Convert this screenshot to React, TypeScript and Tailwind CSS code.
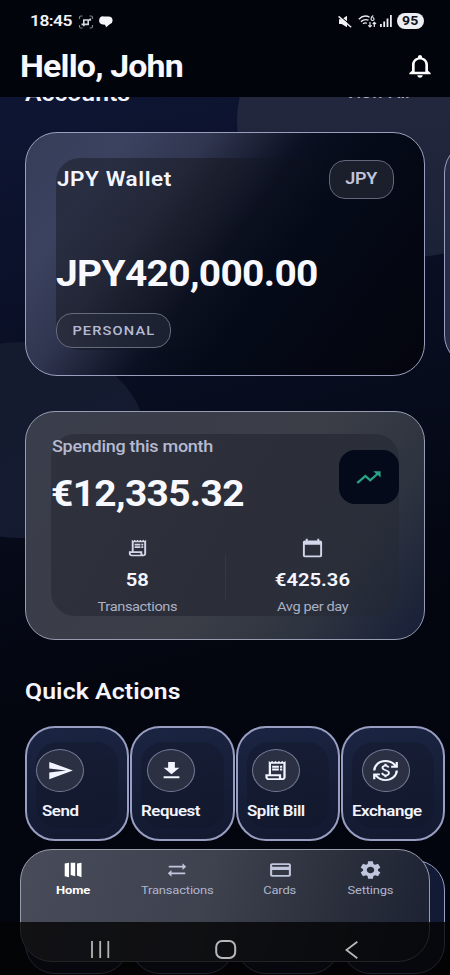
import React, { ReactNode } from 'react';
import clsx from 'clsx';
import { twMerge } from 'tailwind-merge';
import { IconType } from 'react-icons';
import {
  MdCalendarToday,
  MdCurrencyExchange,
  MdDownload,
  MdNotificationsNone,
  MdOutlineCreditCard,
  MdOutlineReceiptLong,
  MdSend,
  MdSettings,
  MdSyncAlt,
  MdTrendingUp,
} from 'react-icons/md';

interface TextProps {
  className?: string;
  children: ReactNode;
}

// All the type in the app is set slightly wide
function Text({ className, children }: TextProps) {
  return (
    <span className={twMerge('inline-block whitespace-nowrap scale-x-[1.125]', className)}>
      {children}
    </span>
  );
}

interface QuickAction {
  label: string;
  icon: IconType;
  circle: string;
  text: string;
}

const quickActions: QuickAction[] = [
  { label: 'Send', icon: MdSend, circle: 'ml-0', text: 'ml-[6px]' },
  { label: 'Request', icon: MdDownload, circle: 'ml-[6px]', text: 'ml-0' },
  { label: 'Split Bill', icon: MdOutlineReceiptLong, circle: 'ml-[5px]', text: 'ml-0' },
  { label: 'Exchange', icon: MdCurrencyExchange, circle: 'ml-[10px]', text: 'ml-0' },
];

function StatusBar() {
  return (
    <div className="flex h-[42px] items-center pl-[30px] pr-[26px] text-[#f1f2f6]">
      <Text className="mt-[2px] origin-left text-[15.500px] leading-none font-semibold tracking-[-0.500px]">18:45</Text>
      <svg className="mt-px ml-[11px] h-[14px] w-[16px]" viewBox="0 0 15 14" fill="none" stroke="#d5d7de" strokeWidth="1.2">
        <path d="M1 4V2.5Q1 1 2.5 1H4M11 1h1.500Q14 1 14 2.500V4M14 10v1.500Q14 13 12.500 13H11M4 13H2.500Q1 13 1 11.500V10" strokeOpacity="0.6" />
        <path d="M3 9.400h6.700V5M5.300 11.200V5h6.500V3.500" strokeWidth="1.600" />
      </svg>
      <svg className="mt-px ml-[5px] h-3 w-[14px]" viewBox="0 0 15 12" fill="#f4f5f8">
        <path d="M5 0h5a4.300 4.300 0 0 1 1.500 8.400L7.600 11.700 6.500 9 4 8.600A4.300 4.300 0 0 1 5 0z" />
      </svg>
      <div className="ml-auto flex items-center">
        <svg className="h-[13px] w-[14px]" viewBox="0 0 14 13">
          <path d="M1 4.300h2.700L9 .8v11.400L3.700 9H1z" fill="#f1f2f6" />
          <path d="M1.300.600 14 11" stroke="#02040c" strokeWidth="1.200" />
          <path d="M.6 1.400 13.200 12.200" stroke="#f1f2f6" strokeWidth="1.400" />
        </svg>
        <svg className="ml-[6px] h-[13px] w-[19px]" viewBox="0 0 19 13" fill="none" stroke="#e6e8ee" strokeWidth="1.400">
          <path d="M.8 4.200Q6-.8 11.500 2.200M2.900 6.600Q6.500 3.600 10.500 5.200M5 8.700Q7 7.300 8.800 8.300" />
          <path d="M15.300.6Q13 2 13 4a1.500 1.500 0 1 0 1.500-1.500M12 7v5M10.300 10.300 12 12l1.700-1.700M16.300 12V7.500M14.700 9l1.600-1.600L18 9" strokeWidth="1.200" />
        </svg>
        <svg className="ml-[3px] h-3 w-[12px]" viewBox="0 0 12 12" fill="#eceef3">
          <path d="M0 9h1.800v3H0zM3.300 6.500h1.800V12H3.300zM6.600 3.500h1.800V12H6.600zM10 0h1.800v12H10z" />
        </svg>
        <div className="ml-[5px] flex h-4 w-[27px] items-center justify-center rounded-full bg-[#eceef4]">
          <Text className="text-[12.500px] leading-none font-bold text-[#10131c]">95</Text>
        </div>
      </div>
    </div>
  );
}

function Header() {
  return (
    <header className="relative z-10 h-[97px] bg-[#02040c]">
      <StatusBar />
      <div className="flex h-12 items-center justify-between pr-[14px] pl-5">
        <Text className="origin-left scale-x-[1.06] text-[32px] leading-[34px] font-bold tracking-[-0.800px] text-[#f8f9ff]">
          Hello, John
        </Text>
        <MdNotificationsNone className="h-7 w-8 text-white" preserveAspectRatio="none" />
      </div>
    </header>
  );
}

// Large soft discs behind the cards
function Backdrop() {
  return (
    <svg className="absolute inset-0 h-full w-full" viewBox="0 0 450 975">
      <defs>
        <linearGradient id="disc" x1="0" y1="0" x2="0" y2="1">
          <stop offset="0" stopColor="#272c44" />
          <stop offset="1" stopColor="#1b2136" />
        </linearGradient>
        <linearGradient id="disc2" x1="0" y1="0" x2="0.8" y2="1">
          <stop offset="0" stopColor="#151b2e" />
          <stop offset="1" stopColor="#141a30" />
        </linearGradient>
      </defs>
      <ellipse cx="402" cy="121" rx="165" ry="137" fill="url(#disc)" />
      <ellipse cx="22" cy="440" rx="124" ry="98" fill="url(#disc2)" />
    </svg>
  );
}

function Accounts() {
  return (
    <section>
      <div className="-mt-[12px] flex h-[47px] items-start justify-between pr-[40px] pl-[25px]">
        <Text className="origin-left text-[22px] leading-[17px] font-semibold text-[#f3f4fb]">Accounts</Text>
        <Text className="origin-right text-[16px] leading-[15px] font-medium text-[#a9aec4]">View All</Text>
      </div>
      <div className="flex gap-[19px] overflow-hidden pl-[25px]">
        <div className="h-[244px] w-[400px] shrink-0 rounded-[32px] border-[1.500px] border-[#9a9fbe] bg-[linear-gradient(127deg,#363d58_0%,#3b4260_18%,#30364f_32%,#0b1022_49%,#050a18_62%,#04050d_100%)] pt-[25px] pr-[25px] pl-[30px]">
          <div className="-mr-1 h-[192px] rounded-[24px] bg-[linear-gradient(125deg,#14151c70_0%,#10121870_35%,#02061000_60%)]">
            <div className="flex items-start justify-between pt-[2px] pr-[9px]">
              <Text className="mt-[6px] ml-px origin-left text-[20px] leading-[26px] font-semibold tracking-[0.500px] text-[#f3f5ff]">
                JPY Wallet
              </Text>
              <div className="flex h-[39px] w-[65px] items-center justify-center rounded-2xl border-[1.500px] border-[#63677a] bg-[#1b1f2c]">
                <Text className="-mt-px text-[16px] leading-none font-semibold tracking-[-0.300px] text-[#c0c4db]">JPY</Text>
              </div>
            </div>
            <Text className="mt-[54px] block origin-left scale-x-[1.08] text-[36px] leading-[42px] font-bold tracking-[-0.600px] text-[#f8f9ff]">
              JPY420,000.00
            </Text>
            <div className="mt-[18px] flex h-[35px] w-[115px] items-center justify-center rounded-[16px] border-[1.500px] border-[#656b7d] bg-[linear-gradient(90deg,#292d3d,#1b2031)]">
              <Text className="text-[13px] leading-none font-medium tracking-[1px] text-[#b5bad2]">PERSONAL</Text>
            </div>
          </div>
        </div>
        <div className="h-[226px] w-[400px] shrink-0 self-center rounded-[32px] border-[1.500px] border-[#9a9fbe] bg-[#262c4a]" />
      </div>
    </section>
  );
}

interface StatProps {
  icon: IconType;
  value: string;
  label: string;
}

function Stat({ icon: Icon, value, label }: StatProps) {
  return (
    <div className="flex flex-1 flex-col items-center">
      <Icon className="h-5 w-[23px] text-[#d4d7ea]" preserveAspectRatio="none" />
      <Text className="mt-[11px] text-[18px] leading-[22px] font-semibold text-[#f5f6ff]">{value}</Text>
      <Text className="mt-[8px] text-[13px] leading-4 tracking-[-0.350px] text-[#abb0c4]">{label}</Text>
    </div>
  );
}

function Spending() {
  return (
    <section className="mx-[25px] mt-[35px] h-[229px] rounded-[30px] border-[1.500px] border-[#979cb2] bg-[linear-gradient(125deg,#3a3d4b_0%,#3b3e47_55%,#2d333f_78%,#171f38_100%)] px-[25px] pt-[22px]">
      <div className="h-[182px] rounded-[24px] bg-[linear-gradient(120deg,#2f323d_0%,#2b2e39_60%,#20263280_100%)]">
        <div className="flex h-[101px] items-start justify-between">
          <div className="flex flex-col items-start pt-[3px]">
            <Text className="ml-px origin-left text-[16px] leading-5 font-medium tracking-[-0.250px] text-[#b6bad0]">
              Spending this month
            </Text>
            <Text className="mt-4 origin-left scale-x-[1.08] text-[36px] leading-[42px] font-bold tracking-[-0.600px] text-[#f8f9ff]">
              €12,335.32
            </Text>
          </div>
          <div className="mt-4 flex h-[54px] w-[60px] items-center justify-center rounded-[16px] bg-[#040a19]">
            <MdTrendingUp className="-ml-px h-[25px] w-[29px] text-[#27a586]" preserveAspectRatio="none" />
          </div>
        </div>
        <div className="flex pt-[3px]">
          <Stat icon={MdOutlineReceiptLong} value="58" label="Transactions" />
          <div className="mt-[17px] h-[44px] w-px bg-[#343746]" />
          <Stat icon={MdCalendarToday} value="€425.36" label="Avg per day" />
        </div>
      </div>
    </section>
  );
}

function QuickActions() {
  return (
    <section>
      <Text className="mt-[39px] ml-[25px] block origin-left text-[22px] leading-[26px] font-semibold tracking-[0.100px] text-[#f5f6ff]">
        Quick Actions
      </Text>
      <div className="mt-[21px] grid grid-cols-4 gap-x-px gap-y-[19px] pr-[5px] pl-[25px]">
        {quickActions.map(({ label, icon: Icon, circle, text }) => (
          <div
            key={label}
            className="h-[115px] rounded-[30px] border-2 border-[#989ec2] bg-[linear-gradient(170deg,#1b2442,#12192f)] px-[9px] pt-[14px]"
          >
            <div className="h-[86px] rounded-[22px] bg-[#11182a]/50 pt-[7px]">
              <div className={clsx('flex h-[43px] w-[48px] items-center justify-center rounded-[50%] border-[1.500px] border-[#747a96] bg-[#2b3043]', circle)}>
                <Icon className="h-[23px] w-[27px] text-[#f2f4ff]" preserveAspectRatio="none" />
              </div>
              <Text className={clsx('mt-[10px] block origin-left text-[15px] leading-[18px] font-semibold tracking-[-0.400px] text-[#f3f4fd]', text)}>
                {label}
              </Text>
            </div>
          </div>
        ))}
        {[0, 1, 2, 3].map((n) => (
          <div key={n} className="h-[114px] rounded-[30px] border-[1.500px] border-[#989ec2] bg-[#121a35]" />
        ))}
      </div>
    </section>
  );
}

function HomeIcon() {
  return (
    <svg className="h-5 w-[22px]" viewBox="0 0 22 20" fill="#fff">
      <path d="M2.700 3.600 7 2.800v14.500l-4.300-1.100zM8.700 2.800h4.500v13.400l-4.500-1.300zM15 3.600l4.500-.8v14.500L15 15.400z" />
    </svg>
  );
}

interface TabProps {
  label: string;
  active?: boolean;
  className: string;
  children: ReactNode;
}

function Tab({ label, active, className, children }: TabProps) {
  return (
    <div className={clsx('flex flex-col items-center text-[#c0c6dc]', className)}>
      {children}
      <Text className={clsx('mt-[2px] text-[11.500px] leading-4 tracking-[-0.150px]', active ? 'font-bold text-white' : 'font-normal text-[#b0b6cc]')}>
        {label}
      </Text>
    </div>
  );
}

function TabBar() {
  return (
    <nav className="absolute top-[849px] left-[20px] h-[113px] w-[410px] rounded-[32px] border-[1.500px] border-[#999ca9] bg-[linear-gradient(105deg,#484b59_0%,#3e414e_45%,#2b2f3c_75%,#1c2133_100%)] pt-[10px]">
      <div className="flex">
        <Tab label="Home" active className="w-[104px]">
          <HomeIcon />
        </Tab>
        <Tab label="Transactions" className="w-[104px]">
          <MdSyncAlt className="h-5 w-[22px]" preserveAspectRatio="none" />
        </Tab>
        <Tab label="Cards" className="w-[102px]">
          <MdOutlineCreditCard className="h-5 w-[25px]" preserveAspectRatio="none" />
        </Tab>
        <Tab label="Settings" className="w-[78px]">
          <MdSettings className="-my-px h-[22px] w-[25px]" preserveAspectRatio="none" />
        </Tab>
      </div>
    </nav>
  );
}

function SystemNav() {
  return (
    <div className="absolute inset-x-0 bottom-0 flex h-[53px] items-center bg-[#040404]/80 pt-[2px]">
      <svg className="ml-[91px] h-[17px] w-[19px]" viewBox="0 0 19 17" stroke="#b4b4b4" strokeWidth="1.800">
        <path d="M1 0v17M9.200 0v17M17.300 0v17" />
      </svg>
      <svg className="ml-[105px] h-[19px] w-[22px]" viewBox="0 0 22 19" fill="none" stroke="#b8b8b8" strokeWidth="2">
        <rect x="1.200" y="1" width="19" height="17" rx="6" />
      </svg>
      <svg className="ml-[108px] h-[18px] w-[13px]" viewBox="0 0 13 18" fill="none" stroke="#b8b8b8" strokeWidth="1.800">
        <path d="M12.300.8 1.400 9l10.900 8.200" />
      </svg>
    </div>
  );
}

export default function App() {
  return (
    <div className="relative h-[975px] w-[450px] overflow-hidden bg-[linear-gradient(165deg,#10173a_0%,#0e1532_12%,#080d20_40%,#03060f_65%,#02040e_100%)] font-[Roboto,sans-serif]">
      <Backdrop />
      <Header />
      <main className="relative">
        <Accounts />
        <Spending />
        <QuickActions />
      </main>
      <TabBar />
      <SystemNav />
    </div>
  );
}
